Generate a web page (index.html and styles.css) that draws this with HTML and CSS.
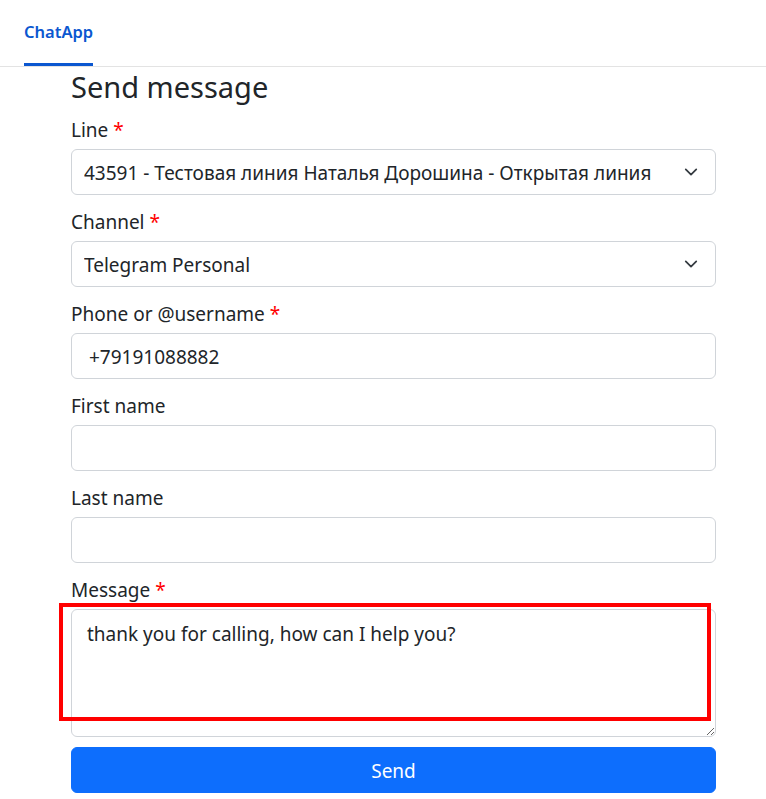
FILE: index.html
```html
<!DOCTYPE html>
<html lang="en">
<head>
<meta charset="utf-8">
<title>ChatApp - Send message</title>
<link rel="stylesheet" href="styles.css">
</head>
<body>
<nav class="topnav">
  <a class="nav-link active" href="#">ChatApp</a>
</nav>
<main class="container">
  <h2 class="page-title">Send message</h2>
  <form class="send-form">
    <div class="field">
      <label class="field-label">Line <span class="req">*</span></label>
      <div class="select-wrap">
        <select class="control select">
          <option>43591 - Тестовая линия Наталья Дорошина - Открытая линия</option>
        </select>
        <svg class="chevron" viewBox="0 0 16 16" width="16" height="16"><path d="M2 5l6 6 6-6" fill="none" stroke="#343a40" stroke-width="2" stroke-linecap="round" stroke-linejoin="round"/></svg>
      </div>
    </div>
    <div class="field">
      <label class="field-label">Channel <span class="req">*</span></label>
      <div class="select-wrap">
        <select class="control select">
          <option>Telegram Personal</option>
        </select>
        <svg class="chevron" viewBox="0 0 16 16" width="16" height="16"><path d="M2 5l6 6 6-6" fill="none" stroke="#343a40" stroke-width="2" stroke-linecap="round" stroke-linejoin="round"/></svg>
      </div>
    </div>
    <div class="field">
      <label class="field-label">Phone or @username <span class="req">*</span></label>
      <input class="control" type="text" value=" +79191088882">
    </div>
    <div class="field">
      <label class="field-label">First name</label>
      <input class="control" type="text" value="">
    </div>
    <div class="field">
      <label class="field-label">Last name</label>
      <input class="control" type="text" value="">
    </div>
    <div class="field field-message">
      <label class="field-label">Message <span class="req">*</span></label>
      <textarea class="control textarea">thank you for calling, how can I help you?</textarea>
      <div class="highlight-box"></div>
    </div>
    <button class="btn-send" type="button">Send</button>
  </form>
</main>
</body>
</html>
```
FILE: styles.css
```css
* { box-sizing: border-box; }
html, body { margin: 0; padding: 0; background: #fff; }
body {
  font-family: "Noto Sans", "Open Sans", sans-serif;
  font-size: 19px;
  color: #212529;
}
.topnav {
  height: 67px;
  border-bottom: 1px solid #e3e3e3;
  padding-left: 24px;
  display: flex;
  align-items: stretch;
}
.nav-link {
  display: flex;
  align-items: center;
  padding-bottom: 0;
  border-bottom: 3px solid transparent;
  font-size: 16.5px;
  font-weight: 600;
  color: #0b57d0;
  text-decoration: none;
}
.nav-link.active { border-bottom-color: #0b57d0; }
.container {
  padding: 0 50px 0 71px;
}
.page-title {
  margin: 0;
  height: 50px;
  font-size: 29px;
  font-weight: 400;
  line-height: 40px;
}
.field {
  margin-bottom: 14px;
}
.field-label {
  display: block;
  height: 27px;
  line-height: 27px;
  margin-bottom: 5px;
}
.req { color: #ff0000; }
.control {
  display: block;
  width: 100%;
  height: 46px;
  padding: 0 12px;
  font-family: inherit;
  font-size: 19px;
  color: #212529;
  background: #fff;
  border: 1px solid #d0d4d9;
  border-radius: 6px;
  outline: none;
}
.select-wrap { position: relative; }
.select {
  appearance: none;
  -webkit-appearance: none;
  padding-right: 40px;
  padding-top: 2px;
}
.chevron {
  position: absolute;
  right: 18px;
  top: 16px;
  width: 14px;
  height: 14px;
  pointer-events: none;
}
input.control { padding-top: 2px; }
.field-message { position: relative; margin-bottom: 10px; }
.textarea {
  height: 128px;
  padding: 11px 15px;
  line-height: 27px;
  resize: vertical;
}
.highlight-box {
  position: absolute;
  left: -12px;
  top: 26px;
  width: 652px;
  height: 118px;
  border: 4px solid #ff0000;
  pointer-events: none;
}
.btn-send {
  display: block;
  width: 100%;
  height: 46px;
  padding-top: 3px;
  font-family: inherit;
  font-size: 19px;
  color: #fff;
  background: #0d6efd;
  border: 1px solid #0d6efd;
  border-radius: 6px;
}
```
